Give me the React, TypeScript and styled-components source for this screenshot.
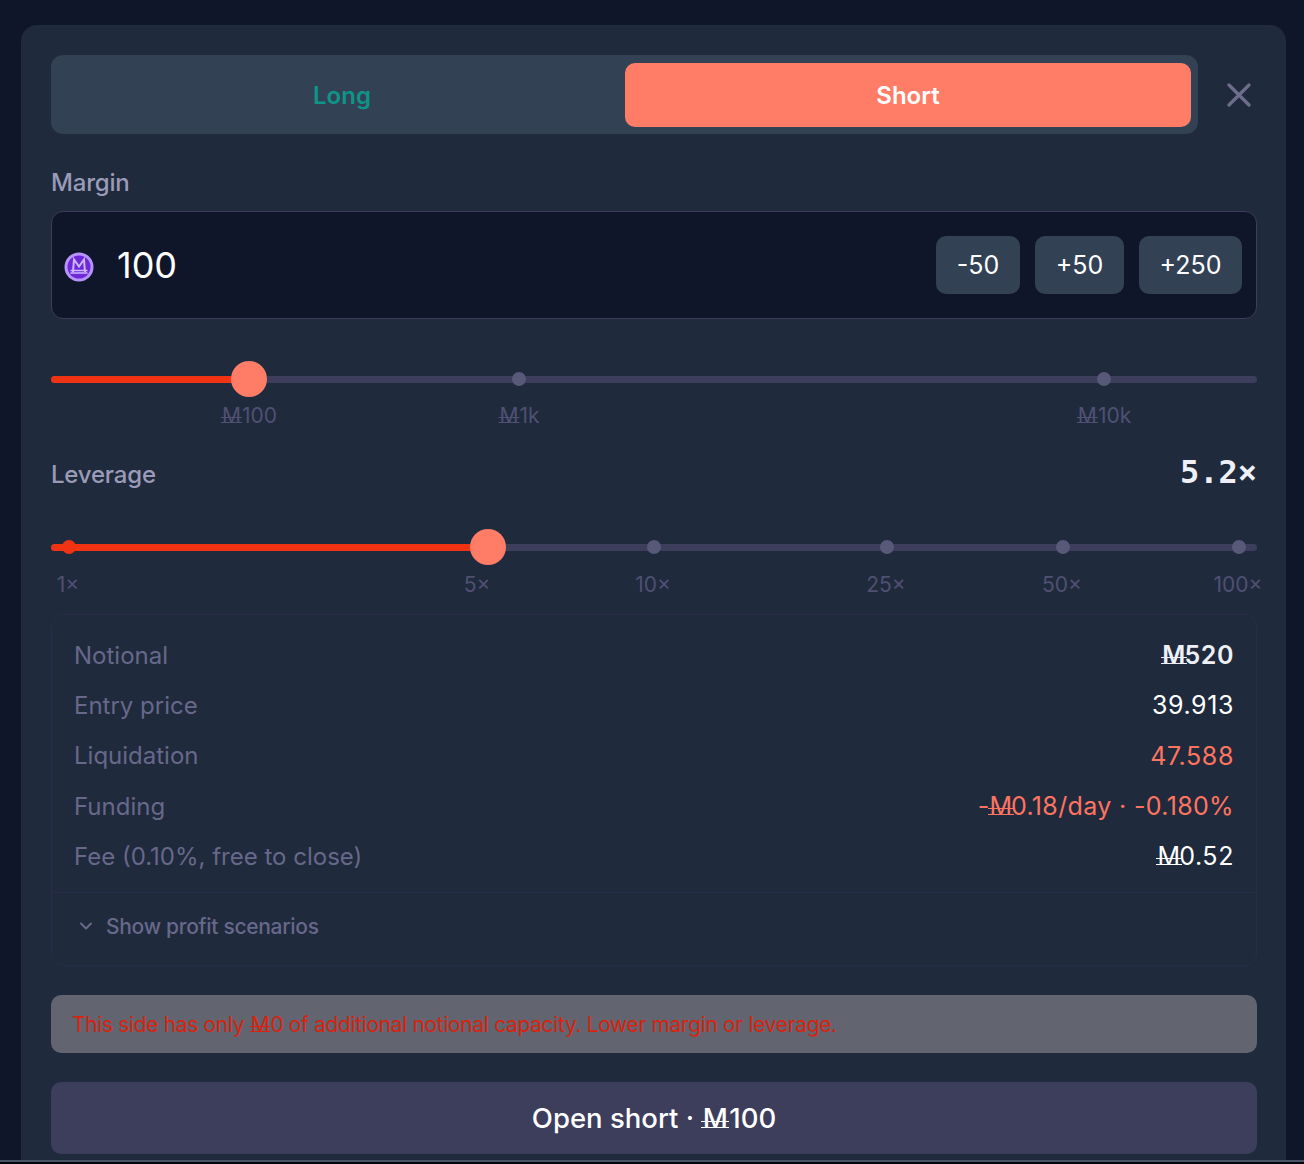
import React from 'react';
import styled, { createGlobalStyle } from 'styled-components';

const GlobalStyle = createGlobalStyle`
  html, body {
    margin: 0;
    padding: 0;
    height: 1164px;
    overflow: hidden;
    background: #05070c;
  }
  * {
    box-sizing: border-box;
  }
`;

const Page = styled.div`
  height: 1160px;
  padding: 25px 18px 0 21px;
  font-family: Inter, 'Noto Sans', sans-serif;
  background: #10162a;
  overflow: hidden;
`;

const BottomEdge = styled.div`
  height: 2px;
  background: #4a5568;
`;

const Panel = styled.div`
  background: #1f2a3c;
  border-radius: 16px 16px 0 0;
  padding: 30px 29px 0 30px;
  height: 1135px;
`;

const TopRow = styled.div`
  display: flex;
  align-items: center;
`;

const Toggle = styled.div`
  flex: 1;
  display: flex;
  height: 79px;
  padding: 8px 7px 7px 8px;
  background: #334155;
  border-radius: 12px;
`;

const ToggleOption = styled.div<{ $active?: boolean }>`
  flex: 1;
  display: flex;
  align-items: center;
  justify-content: center;
  font-size: 24px;
  font-weight: 600;
  border-radius: 10px;
  color: ${(p) => (p.$active ? '#ffffff' : '#0f9488')};
  background: ${(p) => (p.$active ? '#ff7d67' : 'transparent')};
`;

const CloseButton = styled.div`
  width: 59px;
  display: flex;
  justify-content: flex-end;
  padding-right: 6px;
  color: #6e6e8c;
`;

const FieldLabel = styled.div`
  font-size: 24px;
  font-weight: 500;
  letter-spacing: -0.2px;
  color: #9a9bb8;
  line-height: 30px;
`;

const MarginLabel = styled(FieldLabel)`
  margin-top: 34px;
`;

const InputBox = styled.div`
  margin-top: 13px;
  height: 108px;
  display: flex;
  align-items: center;
  padding: 0 14px 0 12px;
  background: #10162a;
  border: 1px solid #3d3d5c;
  border-radius: 12px;
`;

const CoinIcon = styled.svg`
  display: block;
  margin-top: 3px;
`;

const InputValue = styled.div`
  flex: 1;
  margin-left: 23px;
  font-size: 36px;
  color: #ffffff;
`;

const Chips = styled.div`
  display: flex;
  gap: 15px;
`;

const Chip = styled.div<{ $width: number }>`
  width: ${(p) => p.$width}px;
  height: 58px;
  display: flex;
  align-items: center;
  justify-content: center;
  background: #334155;
  border-radius: 10px;
  font-size: 25px;
  color: #ffffff;
`;

const Mana = styled.span`
  position: relative;
  display: inline-block;
  line-height: 1;
  margin: 0 0.05em;
  &::after {
    content: '';
    position: absolute;
    left: -6%;
    right: -6%;
    top: 0.56em;
    height: 0.2em;
    border-top: 0.07em solid currentColor;
    border-bottom: 0.07em solid currentColor;
  }
`;

const Slider = styled.div`
  position: relative;
  height: 36px;
`;

const MarginSlider = styled(Slider)`
  margin-top: 42px;
`;

const LeverageSlider = styled(Slider)`
  margin-top: 39px;
`;

const Track = styled.div`
  position: absolute;
  left: 0;
  right: 0;
  top: 15px;
  height: 7px;
  border-radius: 4px;
  background: #3d3d5c;
`;

const Fill = styled.div`
  position: absolute;
  left: 0;
  top: 15px;
  height: 7px;
  border-radius: 4px;
  background: #f03313;
`;

const Dot = styled.div<{ $on?: boolean }>`
  position: absolute;
  top: 11px;
  width: 14px;
  height: 14px;
  margin-left: -7px;
  border-radius: 50%;
  background: ${(p) => (p.$on ? '#f03313' : '#585878')};
`;

const Thumb = styled.div`
  position: absolute;
  top: 0;
  width: 36px;
  height: 36px;
  margin-left: -18px;
  border-radius: 50%;
  background: #ff7d67;
`;

const Ticks = styled.div<{ $gap: number }>`
  position: relative;
  height: 28px;
  margin-top: ${(p) => p.$gap}px;
`;

const Tick = styled.div`
  position: absolute;
  top: 0;
  transform: translateX(-50%);
  font-size: 21px;
  line-height: 28px;
  color: #4f5072;
  white-space: nowrap;
`;

const LeverageHead = styled.div`
  display: flex;
  align-items: center;
  justify-content: space-between;
  margin-top: 30px;
`;

const LeverageValue = styled.div`
  font-family: 'DejaVu Sans Mono', monospace;
  font-size: 32px;
  font-weight: 700;
  line-height: 30px;
  margin-top: -6px;
  color: #eef0f8;
`;

const StatsCard = styled.div`
  margin-top: 15px;
  padding-bottom: 14px;
  border: 1px solid #282b4a;
  border-radius: 12px;
`;

const Stats = styled.div`
  padding: 15px 22px 11px;
  border-bottom: 1px solid #282b4a;
`;

const StatRow = styled.div`
  display: flex;
  justify-content: space-between;
  align-items: center;
  height: 50.3px;
`;

const StatName = styled.div`
  font-size: 24px;
  color: #67688a;
`;

const StatValue = styled.div<{ $tone?: 'bold' | 'red'; $tight?: boolean }>`
  font-size: 25px;
  letter-spacing: ${(p) => (p.$tight ? '0.35px' : '0.6px')};
  color: ${(p) => (p.$tone === 'red' ? '#ff7460' : p.$tone === 'bold' ? '#eef0f8' : '#ffffff')};
  font-weight: ${(p) => (p.$tone === 'bold' ? 600 : 400)};

  ${Mana} {
    margin: 0 -0.06em 0 0;
  }
`;

const ScenarioToggle = styled.div`
  display: flex;
  align-items: center;
  gap: 12px;
  margin-top: 8px;
  padding: 0 26px;
  height: 50px;
  font-size: 21px;
  letter-spacing: -0.3px;
  font-weight: 500;
  color: #67688a;
`;

const Warning = styled.div`
  margin-top: 29px;
  height: 58px;
  display: flex;
  align-items: center;
  padding: 0 21px;
  border-radius: 10px;
  background: #62646f;
  color: #d9230f;
  font-size: 21px;
  letter-spacing: -0.35px;
  white-space: nowrap;
`;

const OpenButton = styled.div`
  margin-top: 29px;
  height: 72px;
  display: flex;
  align-items: center;
  justify-content: center;
  border-radius: 10px;
  background: #3d3d5c;
  color: #ffffff;
  font-size: 27.5px;
  font-weight: 500;
  white-space: pre;
`;

const TRACK_LEFT = 51;
const pos = (x: number) => `${x - TRACK_LEFT}px`;

const marginTicks = [
  { label: '100', x: 249 },
  { label: '1k', x: 519 },
  { label: '10k', x: 1104 },
];

const leverageTicks = [
  { label: '1×', x: 68 },
  { label: '5×', x: 477 },
  { label: '10×', x: 653 },
  { label: '25×', x: 886 },
  { label: '50×', x: 1062 },
  { label: '100×', x: 1238 },
];

function ManaCoin() {
  return (
    <CoinIcon width="30" height="30" viewBox="0 0 30 30" fill="none">
      <circle cx="15" cy="15" r="14.5" fill="#b794fb" />
      <circle cx="15" cy="15" r="11.5" fill="#6d28d9" />
      <path d="M9 20 L10 7.5 L15 14.5 L20 7.5 L21 20" stroke="#cdb8fd" strokeWidth="2" />
      <path d="M6.5 18.5 H23.5 M6.5 21 H23.5" stroke="#cdb8fd" strokeWidth="1.4" />
    </CoinIcon>
  );
}

export default function App() {
  return (
    <>
      <GlobalStyle />
      <Page>
        <Panel>
          <TopRow>
            <Toggle>
              <ToggleOption>Long</ToggleOption>
              <ToggleOption $active>Short</ToggleOption>
            </Toggle>
            <CloseButton>
              <svg width="24" height="24" viewBox="0 0 24 24" fill="none" stroke="currentColor" strokeWidth="3.2" strokeLinecap="round">
                <path d="M2 2 L22 22 M22 2 L2 22" />
              </svg>
            </CloseButton>
          </TopRow>

          <MarginLabel>Margin</MarginLabel>
          <InputBox>
            <ManaCoin />
            <InputValue>100</InputValue>
            <Chips>
              <Chip $width={84}>-50</Chip>
              <Chip $width={89}>+50</Chip>
              <Chip $width={103}>+250</Chip>
            </Chips>
          </InputBox>

          <MarginSlider>
            <Track />
            <Fill style={{ width: pos(249) }} />
            <Dot style={{ left: pos(519) }} />
            <Dot style={{ left: pos(1104) }} />
            <Thumb style={{ left: pos(249) }} />
          </MarginSlider>
          <Ticks $gap={5}>
            {marginTicks.map((t) => (
              <Tick key={t.label} style={{ left: pos(t.x) }}>
                <Mana>M</Mana>
                {t.label}
              </Tick>
            ))}
          </Ticks>

          <LeverageHead>
            <FieldLabel>Leverage</FieldLabel>
            <LeverageValue>5.2×</LeverageValue>
          </LeverageHead>

          <LeverageSlider>
            <Track />
            <Fill style={{ width: pos(488) }} />
            <Dot $on style={{ left: pos(69) }} />
            <Dot style={{ left: pos(654) }} />
            <Dot style={{ left: pos(887) }} />
            <Dot style={{ left: pos(1063) }} />
            <Dot style={{ left: pos(1239) }} />
            <Thumb style={{ left: pos(488) }} />
          </LeverageSlider>
          <Ticks $gap={6}>
            {leverageTicks.map((t) => (
              <Tick key={t.label} style={{ left: pos(t.x) }}>
                {t.label}
              </Tick>
            ))}
          </Ticks>

          <StatsCard>
            <Stats>
              <StatRow>
                <StatName>Notional</StatName>
                <StatValue $tone="bold">
                  <Mana>M</Mana>520
                </StatValue>
              </StatRow>
              <StatRow>
                <StatName>Entry price</StatName>
                <StatValue>39.913</StatValue>
              </StatRow>
              <StatRow>
                <StatName>Liquidation</StatName>
                <StatValue $tone="red">47.588</StatValue>
              </StatRow>
              <StatRow>
                <StatName>Funding</StatName>
                <StatValue $tone="red" $tight>
                  -<Mana>M</Mana>0.18/day · -0.180%
                </StatValue>
              </StatRow>
              <StatRow>
                <StatName>Fee (0.10%, free to close)</StatName>
                <StatValue>
                  <Mana>M</Mana>0.52
                </StatValue>
              </StatRow>
            </Stats>

            <ScenarioToggle>
              <svg width="16" height="16" viewBox="0 0 16 16" fill="none" stroke="currentColor" strokeWidth="2" strokeLinecap="round" strokeLinejoin="round">
                <path d="M3 5.5 L8 10.5 L13 5.5" />
              </svg>
              Show profit scenarios
            </ScenarioToggle>
          </StatsCard>

          <Warning>
            <span>
              This side has only <Mana>M</Mana>0 of additional notional capacity. Lower margin or leverage.
            </span>
          </Warning>

          <OpenButton>
            <span>
              Open short · <Mana>M</Mana>100
            </span>
          </OpenButton>
        </Panel>
      </Page>
      <BottomEdge />
    </>
  );
}
